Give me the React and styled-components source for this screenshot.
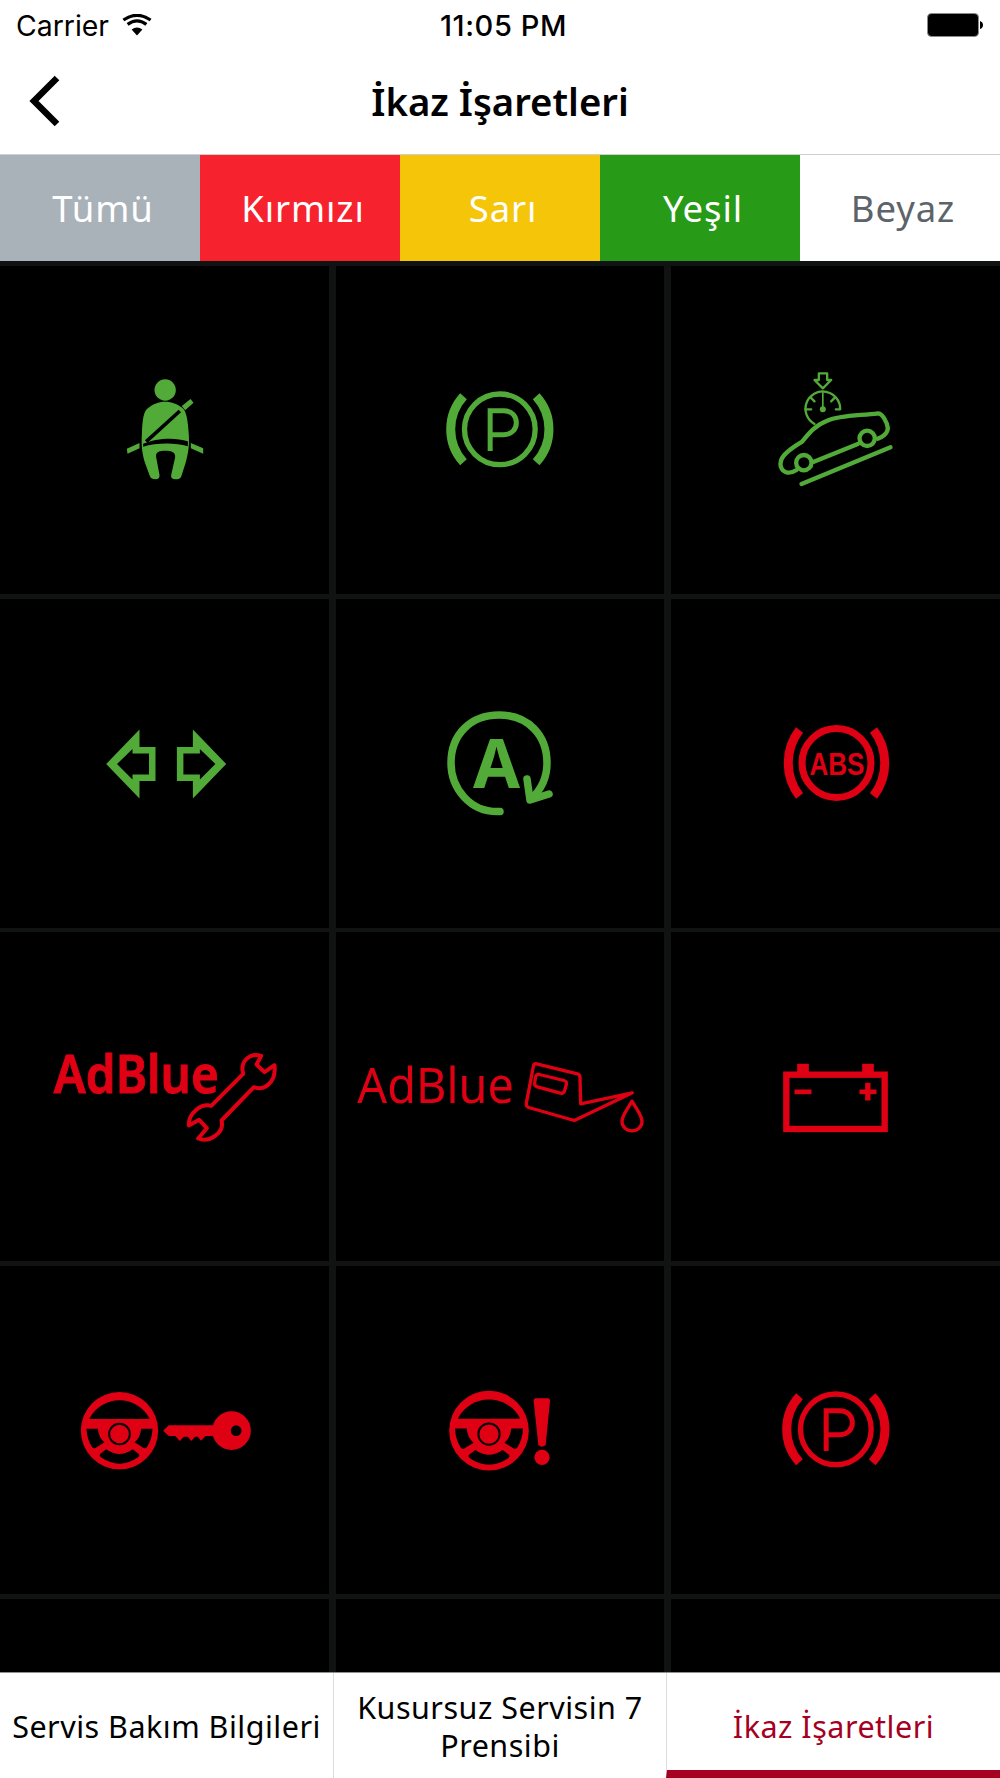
import React from 'react';
import styled, { createGlobalStyle } from 'styled-components';

const GREEN = '#52ab39';
const RED = '#e00014';

const Global = createGlobalStyle`
  html, body { margin: 0; padding: 0; background: #fff; }
  #root { width: 1000px; height: 1778px; }
`;

const Page = styled.div`
  width: 1000px;
  height: 1778px;
  display: flex;
  flex-direction: column;
  overflow: hidden;
  font-family: "Noto Sans", sans-serif;
`;

const StatusBar = styled.div`
  height: 50px;
  flex: none;
  display: grid;
  grid-template-columns: 1fr auto 1fr;
  align-items: center;
  padding: 0 17px 0 16px;
  font-family: Inter, sans-serif;
  font-size: 28.4px;
  color: #000;
`;
const StatusLeft = styled.div`
  display: flex;
  align-items: center;
  gap: 13px;
`;
const StatusTime = styled.div`
  font-weight: 500;
  font-size: 29px;
  letter-spacing: 0.6px;
  transform: translateX(4px);
`;
const BatteryWrap = styled.div`
  justify-self: end;
  display: flex;
  line-height: 0;
`;

const NavBar = styled.div`
  height: 104px;
  flex: none;
  display: flex;
  align-items: center;
  justify-content: center;
  position: relative;
  border-bottom: 1px solid #cfcfcf;
  box-sizing: content-box;
`;
const BackIcon = styled.svg`
  position: absolute;
  left: 26px;
  top: 24px;
`;
const Title = styled.h1`
  margin: 0;
  font-size: 38.3px;
  font-weight: 600;
  color: #000;
  line-height: 1;
  transform: translateY(-1px);
`;

const Filters = styled.div`
  height: 106px;
  flex: none;
  display: grid;
  grid-template-columns: repeat(5, 1fr);
`;
const Filter = styled.div`
  display: flex;
  align-items: center;
  justify-content: center;
  padding-left: 6px;
  background: ${p => p.$bg};
  color: ${p => p.$fg};
  font-size: 36.5px;
  letter-spacing: 0.9px;
`;

const GridArea = styled.div`
  flex: 1;
  min-height: 0;
  overflow: hidden;
  background: #111313;
  border-bottom: 1px solid #8d9196;
`;
const Grid = styled.div`
  display: grid;
  grid-template-columns: 329px 328px 329px;
  grid-auto-rows: 328.5px;
  column-gap: 7px;
  row-gap: 4.75px;
  padding-top: 4.75px;
`;
const Cell = styled.div`
  background: #000;
  display: flex;
  align-items: center;
  justify-content: center;
`;

const Tabs = styled.div`
  height: 105px;
  flex: none;
  display: grid;
  grid-template-columns: 333px 333px 1fr;
`;
const Tab = styled.div`
  display: flex;
  align-items: center;
  justify-content: center;
  text-align: center;
  box-sizing: border-box;
  padding: ${p => (p.$active ? '8px 4px 0' : '0 4px')};
  font-size: 30.5px;
  letter-spacing: 0.5px;
  line-height: 38px;
  color: ${p => (p.$active ? '#a50021' : '#000')};
  border-left: ${p => (p.$first ? 'none' : '1px solid #dcdcdc')};
  border-bottom: ${p => (p.$active ? '8px solid #a50021' : 'none')};
`;

/* Draws in the coordinates of a zoomed crop, centred on (cx, cy) */
const Icon = ({ cx = 0, cy = 0, s = 1, children }) => {
  const w = 300;
  const h = 160;
  return (
    <svg
      width={w}
      height={h}
      viewBox={`${cx - (w * s) / 2} ${cy - (h * s) / 2} ${w * s} ${h * s}`}
    >
      {children}
    </svg>
  );
};

const SeatBelt = () => (
  <Icon cx={253.5} cy={270} s={3}>
    <g fill={GREEN}>
      <circle cx="254" cy="150" r="32" />
      <path d="M254 185 C275 185 290 192 305 203 C318 213 322 240 325 285 C327 320 322 345 315 370 L302 410 Q298 418 285 418 Q270 418 272 405 L284 352 C286 335 270 332 254 332 C238 332 224 335 227 352 L237 405 Q238 418 225 418 Q212 418 208 408 L194 370 C186 345 182 320 184 285 C186 240 188 213 204 203 C218 192 233 185 254 185Z" />
      <path d="M304 198 L330 177 L339 188 L314 211Z" />
      <path d="M139 326 L177 309 L177 325 L141 341Z" />
      <path d="M331 309 L368 325 L368 341 L331 325Z" />
    </g>
    <path d="M298 213 L197 305" stroke="#000" strokeWidth="11" fill="none" />
    <path d="M188 311 C225 296 280 290 322 304 L322 319 C280 306 225 309 188 320Z" fill="#000" />
  </Icon>
);

const ParkingMark = ({ color }) => (
  <Icon cx={1216.5} cy={150} s={3}>
    <g fill="none" stroke={color}>
      <circle cx="1216" cy="148" r="106" strokeWidth="16" />
      <path d="M1107 49 A147 147 0 0 0 1107 247" strokeWidth="27" />
      <path d="M1325 49 A147 147 0 0 1 1325 247" strokeWidth="27" />
      <path d="M1187 213 V92 H1228 C1278 92 1278 164 1228 164 H1187" strokeWidth="15" />
    </g>
  </Icon>
);

const HillCar = () => (
  <Icon cx={286.5} cy={240} s={3}>
    <g fill="none" stroke={GREEN} strokeLinecap="round" strokeLinejoin="round">
      <g strokeWidth="13">
        <path d="M168 360 C150 372 128 372 121 350 C115 325 135 305 185 275 C205 250 225 225 260 212 C300 195 360 197 412 190 C425 190 440 215 442 235 C442 250 425 262 412 266" />
        <path d="M220 335 L352 282" />
        <circle cx="190" cy="338" r="23" />
        <circle cx="380" cy="265" r="23" />
        <path d="M183 402 L450 292" />
      </g>
      <g strokeWidth="7">
        <path d="M222 222 A52 52 0 1 1 299 178 L286 178" />
        <path d="M195 178 L212 178 M211 143 L222 154 M283 143 L272 154" />
        <path d="M235 70 H260 V90 H272 L247 115 L222 90 H235Z" />
      </g>
      <path d="M247 128 V178" strokeWidth="5" />
    </g>
    <circle cx="247" cy="178" r="9" fill={GREEN} />
  </Icon>
);

const Arrow = 'M-58.8 1 L-25.5 -33.5 V-16 H-9.5 V18 H-25.5 V35.5Z M-48 1 L-32.5 16.5 V11.5 H-16 V-9.5 H-32.5 V-14Z';
const ArrowsIcon = () => (
  <Icon>
    <g fill={GREEN} fillRule="evenodd">
      <path d={Arrow} />
      <path d={Arrow} transform="translate(2.4 0) scale(-1 1)" />
    </g>
  </Icon>
);

const AutoHold = () => (
  <Icon>
    <g fill="none" stroke={GREEN} strokeWidth="7.5" strokeLinecap="round" strokeLinejoin="round">
      <path d="M0 48.5 C-30 50 -49 25 -49 0 C-49 -28 -30 -48 -1 -48 C28 -48 47 -28 47 0 C47 14 42 26 31 36" />
      <path d="M27 16 L30 37 L49 31" />
    </g>
    <text x="-3.5" y="25" textAnchor="middle" fontFamily="'Noto Sans', sans-serif" fontWeight="700" fontSize="68" fill={GREEN}>A</text>
  </Icon>
);

const AbsIcon = () => (
  <Icon>
    <g fill="none" stroke={RED}>
      <circle cx="0.5" cy="0" r="34.5" strokeWidth="7" />
      <path d="M-36.5 -33 A54 54 0 0 0 -36.5 33" strokeWidth="9" />
      <path d="M37.5 -33 A54 54 0 0 1 37.5 33" strokeWidth="9" />
    </g>
    <text x="-26.5" y="11.5" fontFamily="'Liberation Sans', sans-serif" fontWeight="700" fontSize="32" fill={RED} textLength="55" lengthAdjust="spacingAndGlyphs">ABS</text>
  </Icon>
);

const AdBlueWrench = () => (
  <Icon cx={373.5} cy={199.5} s={3}>
    <text x="40" y="187" fontFamily="'Noto Sans', sans-serif" fontWeight="600" fontSize="157" fill={RED} stroke={RED} strokeWidth="3" textLength="495" lengthAdjust="spacingAndGlyphs">AdBlue</text>
    <path
      d="M662 76 C625 66 598 95 608 130 L512 226 C480 218 443 250 445 285 L476 268 L499 293 L473 324 C508 338 553 305 543 270 L640 170 C672 182 708 155 702 104 L672 125 L648 102Z"
      fill="none"
      stroke={RED}
      strokeWidth="12"
      strokeLinejoin="round"
    />
  </Icon>
);

const AdBlueOil = () => (
  <Icon cx={480} cy={169.5} s={3}>
    <text x="52" y="188" fontFamily="'Noto Sans', sans-serif" fontSize="148" fill={RED} textLength="470" lengthAdjust="spacingAndGlyphs">AdBlue</text>
    <g fill="none" stroke={RED} strokeWidth="10" strokeLinejoin="round">
      <path d="M590 70 L712 100 Q720 102 720 110 L722 190 L877 157 L703 240 L566 201 Q557 197 559 188 L580 78 Q582 68 590 70Z" />
      <path d="M598 102 L672 120 Q682 123 679 132 L674 150 Q671 160 661 158 L592 139 Q582 136 584 126 L587 109 Q589 100 598 102Z" />
      <path d="M876 182 C860 210 846 225 846 243 A30 28 0 0 0 906 243 C906 225 892 210 876 182Z" />
    </g>
  </Icon>
);

const BatteryIcon = () => (
  <Icon cx={226.5} cy={139.5} s={3}>
    <rect x="77.5" y="72.5" width="295" height="163" fill="none" stroke={RED} strokeWidth="19" />
    <g fill={RED}>
      <rect x="110" y="40" width="35" height="25" />
      <rect x="305" y="40" width="35" height="25" />
      <rect x="102" y="117" width="51" height="14" />
      <rect x="297" y="117" width="51" height="14" />
      <rect x="314" y="97" width="16" height="53" />
    </g>
  </Icon>
);

const Wheel = ({ x, y, k = 1 }) => (
  <g transform={`translate(${x} ${y}) scale(${k})`}>
    <circle r="116" fill={RED} />
    <g fill="#000">
      <path d="M-90 -37 A102 102 0 0 1 90 -37 Q91 -35 86 -35 H-86 Q-91 -35 -90 -37Z" />
      <path d="M-99 -6 H-65 Q-62 22 -45 35 L-72 52 Q-78 54 -82 50 Q-98 25 -99 -6Z" />
      <path d="M99 -6 H65 Q62 22 45 35 L72 52 Q78 54 82 50 Q98 25 99 -6Z" />
      <path d="M-58 70 L-40 56 Q0 84 40 56 L58 70 Q62 75 56 80 Q0 118 -56 80 Q-62 75 -58 70Z" />
    </g>
    <circle cx="0" cy="10" r="31" fill="none" stroke="#000" strokeWidth="6" />
  </g>
);

const WheelKey = () => (
  <Icon cx={283.5} cy={150} s={3}>
    <Wheel x={147} y={152} />
    <circle cx="483" cy="152" r="58" fill={RED} />
    <path d="M278 152 L295 136 H440 V168 H405 L392 182 L382 170 H374 L362 183 L352 170 H340 L328 183 L314 168 H295Z" fill={RED} />
    <circle cx="497" cy="152" r="16" fill="#000" />
  </Icon>
);

const WheelAlert = () => (
  <Icon cx={210} cy={150} s={3}>
    <Wheel x={177} y={152} k={1.03} />
    <path d="M318 55 H353 Q360 55 360 63 L347 195 Q336 205 325 195 L311 63 Q311 55 318 55Z" fill={RED} />
    <circle cx="336" cy="232" r="23" fill={RED} />
  </Icon>
);

const cells = [
  <SeatBelt />,
  <ParkingMark color={GREEN} />,
  <HillCar />,
  <ArrowsIcon />,
  <AutoHold />,
  <AbsIcon />,
  <AdBlueWrench />,
  <AdBlueOil />,
  <BatteryIcon />,
  <WheelKey />,
  <WheelAlert />,
  <ParkingMark color={RED} />,
  null,
  null,
  null,
];

const filters = [
  { label: 'Tümü', bg: '#a9b1b9', fg: '#fff' },
  { label: 'Kırmızı', bg: '#f6222e', fg: '#fff' },
  { label: 'Sarı', bg: '#f5c50a', fg: '#fff' },
  { label: 'Yeşil', bg: '#279b17', fg: '#fff' },
  { label: 'Beyaz', bg: '#fff', fg: '#5c6369' },
];

export default function App() {
  return (
    <Page>
      <Global />
      <StatusBar>
        <StatusLeft>
          <span>Carrier</span>
          <svg width="30" height="22" viewBox="0 0 30 22">
            <path d="M15 21.5 L9.6 15.6 Q15 11.5 20.4 15.6Z" fill="#000" />
            <path d="M5.6 10.4 Q15 3.4 24.4 10.4" fill="none" stroke="#000" strokeWidth="3.2" />
            <path d="M1.4 6 Q15 -3.4 28.6 6" fill="none" stroke="#000" strokeWidth="3.2" />
          </svg>
        </StatusLeft>
        <StatusTime>11:05 PM</StatusTime>
        <BatteryWrap>
          <svg width="56" height="24" viewBox="0 0 56 24">
            <rect x="0.5" y="0.5" width="51" height="23" rx="4" fill="#000" stroke="#8a8a8a" />
            <path d="M53 8 Q56 9 56 12 Q56 15 53 16Z" fill="#000" />
          </svg>
        </BatteryWrap>
      </StatusBar>
      <NavBar>
        <BackIcon width="34" height="54" viewBox="0 0 34 54">
          <path d="M31 4 L8 27 L31 50" fill="none" stroke="#000" strokeWidth="6.5" />
        </BackIcon>
        <Title>İkaz İşaretleri</Title>
      </NavBar>
      <Filters>
        {filters.map(f => (
          <Filter key={f.label} $bg={f.bg} $fg={f.fg}>{f.label}</Filter>
        ))}
      </Filters>
      <GridArea>
        <Grid>
          {cells.map((c, i) => (
            <Cell key={i}>{c}</Cell>
          ))}
        </Grid>
      </GridArea>
      <Tabs>
        <Tab $first>Servis Bakım Bilgileri</Tab>
        <Tab>Kusursuz Servisin 7 Prensibi</Tab>
        <Tab $active>İkaz İşaretleri</Tab>
      </Tabs>
    </Page>
  );
}
